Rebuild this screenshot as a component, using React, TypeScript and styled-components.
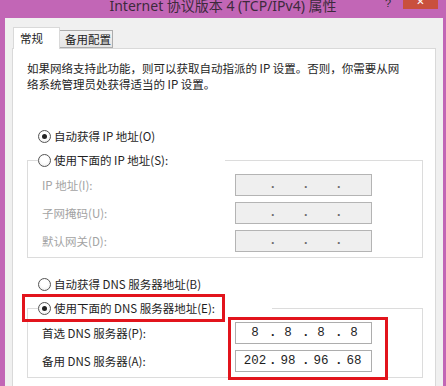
import { Fragment } from 'react'
import styled, { createGlobalStyle } from 'styled-components'

const GlobalStyle = createGlobalStyle`
    html, body {
        margin: 0;
        padding: 0;
        overflow: hidden;
    }
    body {
        font-family: "Noto Sans CJK SC", "Noto Sans", sans-serif;
        color: #1e1e1e;
    }
`

const ipFields = ['IP 地址(I):', '子网掩码(U):', '默认网关(D):']

const dnsFields = [
    { label: '首选 DNS 服务器(P):', parts: ['8', '8', '8', '8'] },
    { label: '备用 DNS 服务器(A):', parts: ['202', '98', '96', '68'] },
]

function Radio({ checked, children }: { checked?: boolean, children: React.ReactNode }) {
    return (
        <>
            <RadioCircle $checked={checked} />
            <span>{children}</span>
        </>
    )
}

function IpInput({ parts, disabled }: { parts?: string[], disabled?: boolean }) {
    const values = parts ?? ['', '', '', '']
    return (
        <IpBox $disabled={disabled}>
            {values.map((v, i) => (
                <Fragment key={i}>
                    {i > 0 && <IpDot $disabled={disabled}>.</IpDot>}
                    <IpPart>{v}</IpPart>
                </Fragment>
            ))}
        </IpBox>
    )
}

export default function App() {
    return (
        <Window>
            <GlobalStyle />
            <TitleBar>
                <span />
                <Title>Internet 协议版本 4 (TCP/IPv4) 属性</Title>
                <Controls>
                    <HelpGlyph>?</HelpGlyph>
                    <CloseButton>✕</CloseButton>
                </Controls>
            </TitleBar>
            <Body>
                <TabRow>
                    <Tab $active>常规</Tab>
                    <Tab>备用配置</Tab>
                </TabRow>
                <Panel>
                    <Intro>
                        如果网络支持此功能，则可以获取自动指派的 IP 设置。否则，你需要从网
                        <br />
                        络系统管理员处获得适当的 IP 设置。
                    </Intro>

                    <RadioRow $top={32}>
                        <Radio checked>自动获得 IP 地址(O)</Radio>
                    </RadioRow>
                    <GroupBox>
                        <Legend $width={187}>
                            <Radio>使用下面的 IP 地址(S):</Radio>
                        </Legend>
                        <Fields>
                            <LabelColumn>
                                {ipFields.map(label => (
                                    <FieldLabel key={label} $disabled>{label}</FieldLabel>
                                ))}
                            </LabelColumn>
                            <InputColumn>
                                {ipFields.map(label => (
                                    <IpInput key={label} disabled />
                                ))}
                            </InputColumn>
                        </Fields>
                    </GroupBox>

                    <RadioRow $top={14}>
                        <Radio>自动获得 DNS 服务器地址(B)</Radio>
                    </RadioRow>
                    <GroupBox>
                        <Legend $width={234}>
                            <Radio checked>使用下面的 DNS 服务器地址(E):</Radio>
                            <Highlight style={{ left: -16, top: -2, width: 203, height: 28 }} />
                        </Legend>
                        <Fields>
                            <LabelColumn>
                                {dnsFields.map(f => (
                                    <FieldLabel key={f.label}>{f.label}</FieldLabel>
                                ))}
                            </LabelColumn>
                            <InputColumn>
                                {dnsFields.map(f => (
                                    <IpInput key={f.label} parts={f.parts} />
                                ))}
                                <Highlight style={{ left: -7, top: -5, width: 160, height: 63 }} />
                            </InputColumn>
                        </Fields>
                    </GroupBox>
                </Panel>
            </Body>
        </Window>
    )
}

const Window = styled.div`
    width: 446px;
    height: 386px;
    background: #c266b6;
    display: flex;
    flex-direction: column;
    overflow: hidden;
`

const TitleBar = styled.div`
    height: 18px;
    flex: none;
    display: grid;
    grid-template-columns: 1fr auto 1fr;
    align-items: start;
`

const Title = styled.div`
    font-family: "Noto Sans", "Noto Sans CJK SC", sans-serif;
    font-size: 14px;
    line-height: 14px;
    margin-top: -1px;
    color: #3d2a3c;
    white-space: nowrap;
`

const Controls = styled.div`
    justify-self: end;
    display: flex;
    align-items: flex-start;
    gap: 12px;
    margin-right: 8px;
`

const HelpGlyph = styled.span`
    font-family: "Liberation Sans", sans-serif;
    font-size: 11px;
    line-height: 9px;
    color: #2d2d2d;
    margin-top: -1px;
`

const CloseButton = styled.div`
    width: 35px;
    height: 9px;
    background: #c9503d;
    color: #fff;
    font-family: "DejaVu Sans", sans-serif;
    font-size: 10px;
    line-height: 4px;
    text-align: center;
    overflow: hidden;
`

const Body = styled.div`
    flex: 1;
    margin: 0 3px 0 5px;
    background: #f0f0f0;
    padding: 9px 7px 0 7px;
    display: flex;
    flex-direction: column;
`

const TabRow = styled.div`
    display: flex;
    align-items: flex-end;
    padding-left: 1px;
    position: relative;
    z-index: 1;
`

const Tab = styled.div<{ $active?: boolean }>`
    box-sizing: border-box;
    width: ${({ $active }) => ($active ? 47 : 53)}px;
    height: ${({ $active }) => ($active ? 22 : 18)}px;
    margin-bottom: ${({ $active }) => ($active ? -1 : 0)}px;
    border: 1px solid ${({ $active }) => ($active ? '#d9d9d9' : '#acacac')};
    border-bottom: ${({ $active }) => ($active ? 'none' : '1px solid #acacac')};
    border-left: ${({ $active }) => ($active ? '1px solid #d9d9d9' : 'none')};
    background: ${({ $active }) => ($active ? '#fff' : 'linear-gradient(#f2f2f2, #e5e5e5)')};
    font-size: 11.5px;
    line-height: ${({ $active }) => ($active ? 20 : 16)}px;
    padding-left: ${({ $active }) => ($active ? 6 : 5)}px;
    color: #1e1e1e;
`

const Panel = styled.div`
    flex: 1;
    background: #fff;
    border: 1px solid #d9d9d9;
    border-bottom: none;
    padding: 11px 0 0 14px;
    display: flex;
    flex-direction: column;
    align-items: flex-start;
`

const Intro = styled.p`
    margin: 0;
    font-size: 11.5px;
    line-height: 16px;
    white-space: nowrap;
`

const RadioRow = styled.div<{ $top: number }>`
    height: 24px;
    margin-top: ${({ $top }) => $top}px;
    padding-left: 11px;
    display: flex;
    align-items: center;
    gap: 3px;
    font-size: 11.5px;
    white-space: nowrap;
`

const RadioCircle = styled.span<{ $checked?: boolean }>`
    box-sizing: border-box;
    width: 13px;
    height: 13px;
    border-radius: 50%;
    border: 1px solid #555;
    background: radial-gradient(circle at 50% 40%, #fff 40%, #e6e6e6);
    display: flex;
    align-items: center;
    justify-content: center;
    flex: none;

    &::after {
        content: '';
        display: ${({ $checked }) => ($checked ? 'block' : 'none')};
        width: 5px;
        height: 5px;
        border-radius: 50%;
        background: #222;
    }
`

const GroupBox = styled.div`
    box-sizing: border-box;
    width: 396px;
    margin-top: 12px;
    border: 1px solid #dcdcdc;
    padding: 0 0 5px 14px;
`

const Legend = styled.div<{ $width: number }>`
    position: relative;
    width: ${({ $width }) => $width}px;
    height: 24px;
    margin: -13px 0 0 -4px;
    background: #fff;
    display: flex;
    align-items: center;
    gap: 3px;
    font-size: 11.5px;
    white-space: nowrap;
`

const Fields = styled.div`
    display: flex;
    padding-top: 2px;
`

const LabelColumn = styled.div`
    width: 193px;
    display: flex;
    flex-direction: column;
    gap: 6px;
`

const FieldLabel = styled.div<{ $disabled?: boolean }>`
    height: 22px;
    line-height: 22px;
    font-size: 11.5px;
    white-space: nowrap;
    color: ${({ $disabled }) => ($disabled ? '#a3a3a3' : '#1e1e1e')};
`

const InputColumn = styled.div`
    position: relative;
    display: flex;
    flex-direction: column;
    gap: 6px;
`

const IpBox = styled.div<{ $disabled?: boolean }>`
    box-sizing: border-box;
    width: 137px;
    height: 22px;
    padding-left: 5px;
    border: 1px solid ${({ $disabled }) => ($disabled ? '#b4b4b4' : '#adadad')};
    background: ${({ $disabled }) => ($disabled ? '#efefef' : '#fff')};
    display: flex;
    align-items: center;
`

const IpPart = styled.span`
    width: 28px;
    text-align: center;
    font-family: "Liberation Mono", monospace;
    font-size: 12.5px;
    color: #1e1e1e;
`

const IpDot = styled.span<{ $disabled?: boolean }>`
    width: 5px;
    text-align: center;
    font-family: "Liberation Mono", monospace;
    font-size: 12.5px;
    font-weight: bold;
    color: ${({ $disabled }) => ($disabled ? '#6d6d6d' : '#1e1e1e')};
`

const Highlight = styled.span`
    position: absolute;
    box-sizing: border-box;
    border: 3px solid #e2141c;
    pointer-events: none;
`
